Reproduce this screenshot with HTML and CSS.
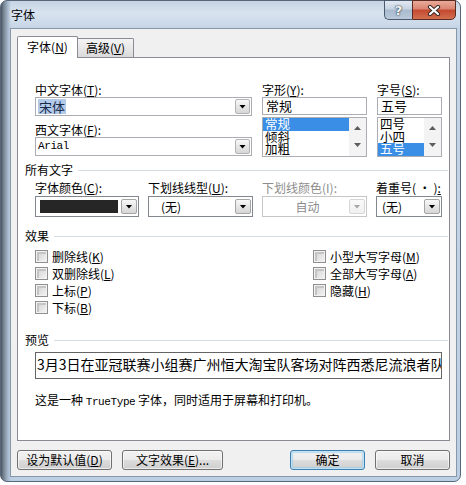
FILE: index.html
```html
<!DOCTYPE html>
<html lang="zh-CN">
<head>
    <meta charset="UTF-8">
    <title>字体</title>
    <link rel="stylesheet" href="styles.css">
</head>
<body>

<div class="window">
    <!-- Title bar -->
    <div class="titlebar">
        <span class="title">字体</span>
        <div class="caption">
            <span class="cap-btn help">?</span>
            <span class="cap-btn close">
                <svg width="14" height="11" viewBox="0 0 14 11">
                    <path d="M3 2 L11 9 M11 2 L3 9" stroke="#3b2a26" stroke-width="4.2" stroke-linecap="round"/>
                    <path d="M3 2 L11 9 M11 2 L3 9" stroke="#fff" stroke-width="2.2" stroke-linecap="round"/>
                </svg>
            </span>
        </div>
    </div>

    <div class="client">
        <!-- Tabs -->
        <div class="tabs">
            <div class="tab active">字体(<u>N</u>)</div>
            <div class="tab">高级(<u>V</u>)</div>
        </div>

        <div class="panel">
            <!-- Font / style / size -->
            <div class="font-grid">
                <div class="col col-font">
                    <label class="lbl">中文字体(<u>T</u>):</label>
                    <div class="combo edit">
                        <span class="value big"><span class="sel-inactive">宋体</span></span>
                        <span class="drop"></span>
                    </div>
                    <label class="lbl lbl-gap">西文字体(<u>F</u>):</label>
                    <div class="combo edit">
                        <span class="value mono">Arial</span>
                        <span class="drop"></span>
                    </div>
                </div>
                <div class="col col-style">
                    <label class="lbl">字形(<u>Y</u>):</label>
                    <div class="textbox">常规</div>
                    <div class="listbox">
                        <ul>
                            <li class="selected">常规</li>
                            <li>倾斜</li>
                            <li>加粗</li>
                        </ul>
                        <div class="vscroll"><span class="arrow-up"></span><span class="arrow-down"></span></div>
                    </div>
                </div>
                <div class="col col-size">
                    <label class="lbl">字号(<u>S</u>):</label>
                    <div class="textbox">五号</div>
                    <div class="listbox">
                        <ul>
                            <li>四号</li>
                            <li>小四</li>
                            <li class="selected">五号</li>
                        </ul>
                        <div class="vscroll"><span class="arrow-up"></span><span class="arrow-down"></span></div>
                    </div>
                </div>
            </div>

            <!-- All text -->
            <div class="group-head"><span>所有文字</span></div>
            <div class="attr-row">
                <div class="field f-color">
                    <label class="lbl">字体颜色(<u>C</u>):</label>
                    <div class="combo pick">
                        <span class="swatch"></span>
                        <span class="drop"></span>
                    </div>
                </div>
                <div class="field f-line">
                    <label class="lbl">下划线线型(<u>U</u>):</label>
                    <div class="combo pick">
                        <span class="value pad-wide">(无)</span>
                        <span class="drop"></span>
                    </div>
                </div>
                <div class="field f-linecolor">
                    <label class="lbl disabled">下划线颜色(I):</label>
                    <div class="combo pick off">
                        <span class="value center">自动</span>
                        <span class="drop"></span>
                    </div>
                </div>
                <div class="field f-dot">
                    <label class="lbl">着重号( · )<u>:</u></label>
                    <div class="combo pick">
                        <span class="value pad-narrow">(无)</span>
                        <span class="drop"></span>
                    </div>
                </div>
            </div>

            <!-- Effects -->
            <div class="group-head"><span>效果</span></div>
            <div class="effects">
                <div class="check-col first">
                    <div class="check"><span class="box"></span><span>删除线(<u>K</u>)</span></div>
                    <div class="check"><span class="box"></span><span>双删除线(<u>L</u>)</span></div>
                    <div class="check"><span class="box"></span><span>上标(<u>P</u>)</span></div>
                    <div class="check"><span class="box"></span><span>下标(<u>B</u>)</span></div>
                </div>
                <div class="check-col">
                    <div class="check"><span class="box"></span><span>小型大写字母(<u>M</u>)</span></div>
                    <div class="check"><span class="box"></span><span>全部大写字母(<u>A</u>)</span></div>
                    <div class="check"><span class="box"></span><span>隐藏(<u>H</u>)</span></div>
                </div>
            </div>

            <!-- Preview -->
            <div class="group-head"><span>预览</span></div>
            <div class="preview">3月3日在亚冠联赛小组赛广州恒大淘宝队客场对阵西悉尼流浪者队</div>
            <p class="note">这是一种 <span class="mono">TrueType</span> 字体，同时适用于屏幕和打印机。</p>
        </div>

        <!-- Dialog buttons -->
        <div class="buttons">
            <button class="btn btn-default-set">设为默认值(<u>D</u>)</button>
            <button class="btn btn-effects">文字效果(<u>E</u>)...</button>
            <button class="btn btn-ok">确定</button>
            <button class="btn btn-cancel">取消</button>
        </div>
    </div>
</div>

</body>
</html>
```

FILE: styles.css
```css
body {
    margin: 0;
    background-color: #ffffff;
    font-family: "Noto Sans CJK SC", "Noto Sans", sans-serif;
    font-size: 12px;
    line-height: 14px;
    color: #000;
}

u {
    text-decoration: underline;
    text-underline-offset: 1px;
}

.mono {
    font-family: "Liberation Mono", monospace;
    font-size: 11px;
    letter-spacing: -0.4px;
}

/* Window frame */
.window {
    width: 461px;
    height: 482px;
    box-sizing: border-box;
    border: 1px solid #56677b;
    border-radius: 7px;
    display: flex;
    flex-direction: column;
    background:
        linear-gradient(90deg, #4d5661 0, #7a8998 3px, #a9bacd 7px, rgba(169, 186, 205, 0) 10px),
        linear-gradient(180deg, #c5d3e3 0, #d8e3ef 12px, #c6d5e6 27px, #bccee2 100%);
}

.titlebar {
    height: 27px;
    flex-shrink: 0;
    display: flex;
    align-items: flex-start;
    padding-left: 10px;
}

.title {
    margin-top: 6px;
    line-height: 16px;
}

.caption {
    margin-left: auto;
    margin-right: 4px;
    margin-top: -1px;
    display: flex;
}

.cap-btn {
    height: 20px;
    box-sizing: border-box;
    display: flex;
    align-items: center;
    justify-content: center;
    border: 1px solid #4b5a6d;
}

.help {
    width: 28px;
    border-right: none;
    border-radius: 0 0 0 5px;
    background: linear-gradient(#e1e9f2, #c6d3e2 45%, #a8bace 50%, #bac9db);
    color: #f4f6f8;
    font: bold 13px "DejaVu Sans", sans-serif;
    text-shadow: 0 0 2px #27313c, 0 0 1px #27313c;
}

.close {
    width: 44px;
    border-color: #5b2b22;
    border-radius: 0 0 5px 0;
    background: linear-gradient(#e9aa9a, #d98470 45%, #c4482f 50%, #d2704f);
}

/* Client area */
.client {
    flex: 1;
    margin: 0 3px 4px 9px;
    background-color: #f0f0f0;
    border: 1px solid #8697ab;
    padding: 7px 6px 0;
    display: flex;
    flex-direction: column;
}

.tabs {
    display: flex;
    align-items: flex-end;
    height: 21px;
}

.tab {
    box-sizing: border-box;
    width: 56px;
    height: 19px;
    border: 1px solid #898c95;
    border-left: none;
    border-bottom: none;
    border-radius: 0 2px 0 0;
    background: linear-gradient(#f4f4f4, #e8e8e8 50%, #dadada);
    text-align: center;
    line-height: 18px;
}

.tab.active {
    width: 61px;
    height: 22px;
    border-left: 1px solid #898c95;
    border-radius: 2px 2px 0 0;
    background: #ffffff;
    margin-bottom: -1px;
    position: relative;
    z-index: 1;
    line-height: 20px;
}

.panel {
    box-sizing: border-box;
    height: 384px;
    border: 1px solid #898c95;
    background-color: #ffffff;
    padding: 25px 7px 0 17px;
}

.lbl {
    display: block;
    height: 14px;
    line-height: 14px;
    white-space: nowrap;
}

.lbl.disabled {
    color: #8d8d8d;
}

.lbl-gap {
    margin-top: 7px;
}

/* Top grid */
.font-grid {
    display: flex;
    gap: 10px;
}

.col-font { width: 217px; }
.col-style { width: 105px; }
.col-size { width: 65px; }

.combo {
    box-sizing: border-box;
    height: 19px;
    border: 1px solid #abadb3;
    background-color: #fff;
    display: flex;
    align-items: stretch;
    padding: 1px;
}

.combo .value {
    flex: 1;
    padding-left: 1px;
    line-height: 15px;
    white-space: nowrap;
}

.value.big {
    font-size: 13px;
}

.sel-inactive {
    display: inline-block;
    background-color: #b3cbe9;
    color: #17284a;
    padding: 0 1px;
}

.drop {
    width: 15px;
    flex-shrink: 0;
    box-sizing: border-box;
    border: 1px solid #b3b3b3;
    border-radius: 2px;
    background: linear-gradient(#f8f8f8, #e6e6e6 50%, #d6d6d6);
    display: flex;
    align-items: center;
    justify-content: center;
}

.drop::after {
    content: "";
    width: 7px;
    height: 4px;
    background-color: #000;
    clip-path: polygon(0 0, 100% 0, 50% 100%);
}

.textbox {
    box-sizing: border-box;
    height: 18px;
    border: 1px solid #abadb3;
    background-color: #fff;
    padding-left: 3px;
    font-size: 13px;
    line-height: 16px;
}

.listbox {
    margin-top: 2px;
    box-sizing: border-box;
    height: 40px;
    border: 1px solid #abadb3;
    display: flex;
    background-color: #fff;
}

.listbox ul {
    flex: 1;
    margin: 0;
    padding: 0;
    list-style: none;
}

.listbox li {
    padding-left: 2px;
    font-size: 12.5px;
    line-height: 12.7px;
    height: 12.7px;
}

.listbox li.selected {
    background-color: #3a8ee6;
    color: #fff;
}

.vscroll {
    width: 17px;
    background-color: #f3f3f3;
    display: flex;
    flex-direction: column;
    align-items: center;
    justify-content: space-between;
    padding: 8px 0 9px;
    box-sizing: border-box;
}

.arrow-up, .arrow-down {
    width: 7px;
    height: 4px;
    background-color: #5c5c5c;
}

.arrow-up { clip-path: polygon(50% 0, 100% 100%, 0 100%); }
.arrow-down { clip-path: polygon(0 0, 100% 0, 50% 100%); }

/* Group headings with rule */
.group-head {
    display: flex;
    align-items: center;
    height: 14px;
    margin-left: -10px;
    margin-right: -6px;
}

.group-head::after {
    content: "";
    flex: 1;
    height: 1px;
    margin-left: 5px;
    background-color: #d5dde5;
}

.font-grid + .group-head { margin-top: 6px; }

/* All text row */
.attr-row {
    display: flex;
    gap: 9px;
    margin-top: 4px;
}

.f-color { width: 104px; }
.f-line { width: 105px; }
.f-linecolor { width: 105px; }
.f-dot { width: 66px; }

.combo.pick {
    height: 21px;
    margin-top: 1px;
    border-color: #828790;
    padding: 2px 1px 2px 2px;
}

.combo.pick .drop {
    width: 16px;
    border-color: #a5a5a5;
}

.swatch {
    flex: 1;
    margin: 1px 3px 1px 2px;
    background-color: #262626;
}

.pad-wide { padding-left: 10px !important; }
.pad-narrow { padding-left: 3px !important; }
.value.center { text-align: center; }

.combo.off {
    border-color: #c6c6c6;
    color: #8b8b8b;
}

.combo.off .drop {
    border-color: #d6d6d6;
    background: linear-gradient(#fafafa, #f0f0f0);
}

.combo.off .drop::after {
    background-color: #a6a6a6;
}

.attr-row + .group-head { margin-top: 12px; }

/* Effects */
.effects {
    display: flex;
    margin-top: 5px;
}

.check-col.first {
    width: 278px;
}

.check {
    display: flex;
    align-items: center;
    gap: 4px;
    height: 17px;
    white-space: nowrap;
}

.box {
    width: 13px;
    height: 13px;
    box-sizing: border-box;
    border: 1px solid #8e8f8f;
    background: linear-gradient(135deg, #cfcfcf, #f5f5f5);
    box-shadow: inset 0 0 0 1px #f2f2f2, inset 1px 1px 0 2px #c4c4c4;
}

.effects + .group-head { margin-top: 17px; }

/* Preview */
.preview {
    margin-top: 5px;
    box-sizing: border-box;
    height: 27px;
    border: 1px solid #646464;
    background-color: #fff;
    padding-left: 1px;
    font-size: 14px;
    line-height: 22px;
    white-space: nowrap;
    overflow: hidden;
}

.note {
    margin: 14px 0 0;
    white-space: nowrap;
}

/* Bottom buttons */
.buttons {
    display: flex;
    gap: 10px;
    margin-top: 9px;
}

.btn {
    box-sizing: border-box;
    height: 20px;
    padding: 0;
    border: 1px solid #707070;
    border-radius: 3px;
    background: linear-gradient(#f2f2f2 0, #ebebeb 50%, #dddddd 50%, #cfcfcf 100%);
    box-shadow: inset 0 0 0 1px rgba(255, 255, 255, 0.6);
    font-family: "Noto Sans CJK SC", sans-serif;
    font-size: 12px;
    line-height: 16px;
    color: #000;
    white-space: nowrap;
}

.btn-default-set { width: 95px; }
.btn-effects { width: 101px; }

.btn-ok {
    width: 75px;
    margin-left: auto;
    border-color: #3c7fb1;
    box-shadow: inset 0 0 0 1px #bfe3f5, inset 0 0 1px 2px rgba(140, 200, 235, 0.5);
}

.btn-cancel { width: 75px; }
```
